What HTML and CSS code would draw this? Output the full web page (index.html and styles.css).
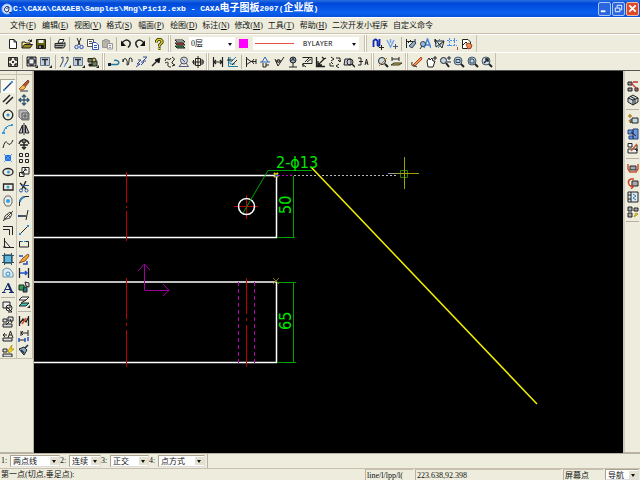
FILE: index.html
```
<!DOCTYPE html>
<html lang="zh-CN">
<head>
<meta charset="utf-8">
<title>CAXA电子图板2007</title>
<link rel="stylesheet" href="styles.css">
</head>
<body>
<div class="app">
<header class="titlebar">
<svg class="logo" viewBox="0 0 12 12"><circle cx="6" cy="6" r="5" fill="#dce8ff" stroke="#8fb4ff"/><path d="M8.500 4.500Q6 2 4 4.500T5 9Q8 9.500 8 6T5.500 6M8 9.500H11" fill="none" stroke="#14306c"/></svg>
<h1>C:\CAXA\CAXAEB\Samples\Mng\Pic12.exb - CAXA<span>电子图板</span>2007(<span>企业版</span>)</h1>
<div class="winbtns">
<button aria-label="最小化"><svg viewBox="0 0 12 12"><path d="M2 9H7" stroke-width="2"/></svg></button>
<button aria-label="还原"><svg viewBox="0 0 12 12"><path d="M4.500 5V2.500H9.500V7.500H8M2.500 5.500H7.500V9.500H2.500Z"/></svg></button>
<button class="close" aria-label="关闭"><svg viewBox="0 0 12 12"><path d="M2.500 2.500L9.500 9.500M9.500 2.500L2.500 9.500" stroke-width="2"/></svg></button>
</div>
</header>
<nav class="menu">
<a href="#">文件(<u>F</u>)</a><a href="#">编辑(<u>E</u>)</a><a href="#">视图(<u>V</u>)</a><a href="#">格式(<u>S</u>)</a><a href="#">幅面(<u>P</u>)</a><a href="#">绘图(<u>D</u>)</a><a href="#">标注(<u>N</u>)</a><a href="#">修改(<u>M</u>)</a><a href="#">工具(<u>T</u>)</a><a href="#">帮助(<u>H</u>)</a><a href="#">二次开发小程序</a><a href="#">自定义命令</a>
</nav>
<div class="toolbars">
<div class="row">
<div class="group">
<button aria-label="新建"><svg viewBox="0 0 12 12"><path d="M2.500 1.500H7L9.500 4V10.500H2.500ZM7 1.500V4H9.500" fill="#fff"/></svg></button>
<button aria-label="打开"><svg viewBox="0 0 12 12"><path d="M1 10V4H4L5 5H9V7" fill="#ffe97a"/><path d="M1 10L3.500 6.500H11.500L9 10Z" fill="#9a8a20"/><path d="M7 2.500Q9 1 10.500 3.500M10.500 1.500V3.500H8.500"/></svg></button>
<button aria-label="保存"><svg viewBox="0 0 12 12"><path d="M1.500 1.500H10.500V10.500H1.500Z" fill="#66660e"/><path d="M3.500 2H8.500V5H3.500Z" fill="#eee" stroke="none"/><path d="M3.500 7.500H8.500V10H3.500Z" fill="#111"/><path d="M5 8V10" stroke="#fff"/></svg></button>
<i class="sep"></i>
<button aria-label="打印"><svg viewBox="0 0 12 12"><path d="M4 5L5.500 1.500H10L8.500 5Z" fill="#fff"/><path d="M1 5.500H9.500L11 4.500V8L9.500 10H1Z" fill="#aaa"/><path d="M1 7.500H9.500M2.500 9.500H8" stroke="#333"/></svg></button>
<i class="sep"></i>
<button aria-label="剪切"><svg viewBox="0 0 12 12"><path d="M4 0L7 7M8 0L5 7"/><g stroke="#2348b8"><circle cx="3.500" cy="9" r="1.700"/><circle cx="8.500" cy="9" r="1.700"/></g></svg></button>
<button aria-label="复制"><svg viewBox="0 0 12 12"><path d="M.5 1.500H6.500V8.500H.5Z" fill="#fff" stroke="#555"/><path d="M2 3.500H5M2 5.500H5" stroke="#555"/><path d="M5.500 4.500H9L11.500 7V11.500H5.500Z" fill="#fff" stroke="#3455b8"/><path d="M7 7.500H10M7 9.500H10" stroke="#3455b8"/></svg></button>
<button aria-label="粘贴"><svg viewBox="0 0 12 12"><path d="M1.500 2.500H8.500V9.500H1.500Z" fill="#b9b5a7" stroke="#999"/><path d="M3.500 1.500H6.500V3H3.500Z" fill="#ddd" stroke="#999"/><path d="M6.500 5.500H11.500V11H6.500ZM8 7.500H10M8 9.500H10" fill="#eee" stroke="#999"/></svg></button>
<i class="sep"></i>
<button aria-label="撤消"><svg viewBox="0 0 12 12"><path d="M2 5Q6 0 9.500 3.500Q11.500 6 8 9.500" stroke-width="1.500"/><path d="M1 2.500V8H6Z" fill="#111" stroke="none"/></svg></button>
<button aria-label="重做"><svg viewBox="0 0 12 12"><path d="M10 5Q6 0 2.500 3.500Q.5 6 4 9.500" stroke-width="1.500"/><path d="M11 2.500V8H6Z" fill="#111" stroke="none"/></svg></button>
<i class="sep"></i>
<button aria-label="帮助"><svg viewBox="0 0 12 12"><path d="M3.500 4.500V3L5 1.500H7.500L9 3V4.500L6.500 7V8.500M5.500 10.500H7.500" stroke-width="3"/><path d="M3.500 4.500V3L5 1.500H7.500L9 3V4.500L6.500 7V8.500M5.500 10.500H7.500" stroke="#e0d414" stroke-width="1.500"/></svg></button>
</div>
<div class="group grip layers">
<button aria-label="层控制"><svg viewBox="0 0 12 12"><path d="M1 2H9L11 4H3Z" fill="#fff"/><path d="M1 5H9L11 7H3Z" fill="#d94a42"/><path d="M1 8H9L11 10H3Z" fill="#36a05c"/></svg></button>
<span class="combo layer"><select aria-label="当前层"><option>0层</option></select></span>
<button class="swatch" aria-label="颜色"></button>
<span class="combo linetype"><select aria-label="线型"><option>BYLAYER</option></select></span>
</div>
<div class="group grip">
<button aria-label="捕捉设置"><svg viewBox="0 0 12 12"><path d="M1.500 9V3Q3.500 0 5.500 3V7Q6.500 9 7.500 7V1" stroke="#112bb0" stroke-width="1.800"/><path d="M7 9.500H12M9.500 7V12"/></svg></button>
<button aria-label="导航设置"><svg viewBox="0 0 12 12"><path d="M1 2L4.500 9L8 2M4.500 1V5" stroke="#7aa4e8" stroke-width="1.500"/><path d="M7 8.500H12M9.500 6V11" stroke="#457"/></svg></button>
<i class="sep"></i>
<button aria-label="两点距离"><svg viewBox="0 0 12 12"><path d="M1.500 1V10M1 3.500H10M10 1V6M3 5L6 2"/><path d="M4 8L9 3L11 5L7 10Z" fill="#9ab" stroke="#246"/></svg></button>
<button aria-label="文字查找"><svg viewBox="0 0 12 12"><path d="M5 10L8.500 1L12 10M6.500 7H10.500" stroke="#4887dd" stroke-width="1.600"/><circle cx="4" cy="6" r="2.500" fill="#9bd" stroke="#345"/><path d="M1 11L3 8"/></svg></button>
<button aria-label="查询"><svg viewBox="0 0 12 12"><path d="M1 3H11M2 1L9 10L11 3L3 9Z"/><path d="M2 7L7 1M5 10L9 5" stroke="#3178b7"/></svg></button>
<button aria-label="栅格"><svg viewBox="0 0 12 12"><path d="M2.500 0V9M7.500 0V9M0 2.500H10M0 7.500H10" stroke="#4c8ff0" stroke-dasharray="2 1"/><path d="M10.500 9V12" stroke="#d43"/></svg></button>
<button aria-label="属性"><svg viewBox="0 0 12 12"><path d="M1.500 1.500H7L9.500 4V10.500H1.500Z" fill="#fff"/><path d="M2 7L5 4L7 6"/><path d="M5 6L8 5L11 7L10 10L7 11Z" fill="#ed8d54" stroke="#a54420"/></svg></button>
</div>
</div>
<div class="row second">
<div class="group">
<button aria-label="图幅设置"><svg viewBox="0 0 12 12"><path d="M1.500 1.500H10.500V10.500H1.500Z"/><path d="M3 5V3H5M7 3H9V5M9 7V9H7M5 9H3V7" stroke-width="1.400"/><path d="M5 5H7V7H5Z" fill="#333" stroke="none"/></svg></button>
<i class="sep"></i>
<button aria-label="调入图框"><svg viewBox="0 0 12 12"><path d="M1 1H10V10H1Z" fill="#444"/><path d="M3.500 3.500H7.500V7.500H3.500Z" fill="#e8eef5" stroke="none"/><path d="M2 3.500V2H3.500M7.500 2H9V3.500M2 7.500V9H3.500M7.500 9H9V7.500" stroke="#bcd"/><path d="M12 9V12H9Z" fill="#222" stroke="none"/></svg></button>
<button aria-label="标题栏"><svg viewBox="0 0 12 12"><path d="M.5 1.500H9.500V9.500H.5Z" fill="#bfcde0" stroke="#678"/><path d="M2 3.500H8M5 3V9" stroke-width="1.500"/><path d="M12 9V12H9Z" fill="#222" stroke="none"/></svg></button>
<i class="sep"></i>
<button aria-label="零件序号"><svg viewBox="0 0 12 12"><path d="M1 11L4 5V1M2 2L4 1M6 9L9 4V1M7 2L9 1" stroke="#345"/><path d="M5 11L8 6" stroke="#4680d0"/><path d="M12 9V12H9Z" fill="#222" stroke="none"/></svg></button>
<button aria-label="明细表"><svg viewBox="0 0 12 12"><path d="M.5 1.500H9.500V9.500H.5Z" fill="#bfcde0" stroke="#678"/><path d="M2 3.500H8M5 3V9" stroke-width="1.500"/><path d="M12 9V12H9Z" fill="#222" stroke="none"/></svg></button>
<button aria-label="图库"><svg viewBox="0 0 12 12"><path d="M1 2.500H6V6H1ZM5 5H10V10H5Z" fill="#6b7b56"/><circle cx="7" cy="4" r="2" fill="#c8b860"/><path d="M2 8H5V10H2Z" fill="#111"/><path d="M12 9V12H9Z" fill="#222" stroke="none"/></svg></button>
</div>
<div class="group grip">
<button aria-label="箭头"><svg viewBox="0 0 12 12"><path d="M1 8.500H9Q11.500 8 10.500 5.500Q9 3.500 6 4.500" stroke="#247ca5" stroke-width="1.500"/><path d="M0 7H3V10H0Z" fill="#123" stroke="none"/></svg></button>
<button aria-label="波浪线"><svg viewBox="0 0 12 12"><path d="M1 3V6Q2 1 4 3T5 9Q7 10 7 5T10 3V6"/></svg></button>
<button aria-label="双折线"><svg viewBox="0 0 12 12"><path d="M0 11L4 8H1L5 4H2M5 6H8L5 9M7 1H11L7 5H10" stroke="#334b9a"/></svg></button>
<button aria-label="箭头线"><svg viewBox="0 0 12 12"><path d="M2 10L9 3" stroke-width="1.500"/><path d="M10 2L9 7L5 4Z" fill="#111"/></svg></button>
<button aria-label="齿轮"><svg viewBox="0 0 12 12"><path d="M1 5Q2 1 4 3T7 2M1 7Q5 5 4 8T7 11M8 1Q12 3 9 5T11 9L8 10"/></svg></button>
<button aria-label="圆弧拟合"><svg viewBox="0 0 12 12"><circle cx="6" cy="4.500" r="3.500" fill="#ccd4dd" stroke="#555"/><path d="M4 7L1 10.500H10.500L8 7M4 3L7 6" stroke="#558"/></svg></button>
<button aria-label="孔轴"><svg viewBox="0 0 12 12"><path d="M3.500 2.500H8.500V9.500H3.500ZM1.500 4V8H3M9 4H11V8H9M0 6H12M6 0V12"/></svg></button>
</div>
<div class="group grip">
<button aria-label="尺寸标注"><svg viewBox="0 0 12 12"><path d="M1.500 1V11M10.500 1V11M1 6H11M4 4L2 6L4 8M8 4L10 6L8 8" stroke-width="1.200"/></svg></button>
<button aria-label="坐标标注"><svg viewBox="0 0 12 12"><path d="M2.500 1V10.500H12M4 1V8H9M5 6L10 1" stroke="#287ba5"/><path d="M6 9L11 4M1 4H7"/></svg></button>
<i class="sep"></i>
<button aria-label="倒角标注"><svg viewBox="0 0 12 12"><path d="M1.500 1V11M1 2L6 5.500L1 9M6 5.500H11M9 3L7 5.500L9 8M11 3V8"/></svg></button>
<button aria-label="引出说明"><svg viewBox="0 0 12 12"><path d="M1 6H11M6 1L3 6M6 1L9 6" stroke="#2d62ba"/><path d="M4 7V11M7 7V11H4M7 9H10"/></svg></button>
<button aria-label="粗糙度"><svg viewBox="0 0 12 12"><path d="M2 3L5 10L11 1M2.500 5H8"/><circle cx="5.500" cy="5" r="1.500"/></svg></button>
<button aria-label="基准代号"><svg viewBox="0 0 12 12"><circle cx="6" cy="4" r="3" fill="#92a7bf"/><path d="M6 7V11M2 11H10M4.500 5L6 2L7.500 5"/></svg></button>
<button aria-label="形位公差"><svg viewBox="0 0 12 12"><path d="M1.500 1.500H11V7.500H2V11M4 6L8 2M6 6L10 3M1 8L5 11"/></svg></button>
<button aria-label="焊接符号"><svg viewBox="0 0 12 12"><path d="M1.500 1V10.500H10M2 10L9 3M3 5V9H7M7 1L9 3L11 2" stroke-width="1.300"/></svg></button>
<button aria-label="剖切符号"><svg viewBox="0 0 12 12"><path d="M2 1L5 3L2 5M7 2H11V5M9 4L11 6L12 4M10 8L7 10L10 12M1 7V10H5M2 6L4 8"/></svg></button>
<button aria-label="局部放大"><svg viewBox="0 0 12 12"><path d="M2 3H8V9H1Z" fill="#ccd"/><circle cx="7" cy="6" r="3"/><path d="M9 8L12 11" stroke-width="1.500"/></svg></button>
<button aria-label="标注编辑"><svg viewBox="0 0 12 12"><path d="M1 2H4V9H1M2 5.500H6M8 9L9.500 3L11 9M8 7H11"/></svg></button>
</div>
<div class="group grip">
<button aria-label="重生成"><svg viewBox="0 0 12 12"><circle cx="5" cy="5" r="3.500" fill="#cddde5"/><path d="M8 8L11 11" stroke-width="2"/><path d="M2 10L10 2" stroke="#b8712c"/></svg></button>
<button aria-label="全部重生成"><svg viewBox="0 0 12 12"><path d="M1 3H8M8 1V5M1 1V5"/><path d="M0 9L3 7H11L8 9Z" fill="#d5bb34" stroke="#333"/></svg></button>
</div>
<div class="group grip">
<button aria-label="重画"><svg viewBox="0 0 12 12"><path d="M2 9L8 3L10 1L11 3L4 10Z" fill="#e99a4a" stroke="#b5452c"/><path d="M1 6Q0 11 4 10L6 11" stroke="#222"/></svg></button>
<button aria-label="动态平移"><svg viewBox="0 0 12 12"><path d="M2 5L4 2L5 4L7 2L8 5L10 5L8 11H3Z" fill="#fff"/><path d="M8 2H12M10 0V4"/></svg></button>
<button aria-label="动态缩放"><svg viewBox="0 0 12 12"><circle cx="4.500" cy="4.500" r="3" fill="#bcd5e5"/><path d="M7 7L10 11" stroke-width="2"/><path d="M8 2H12M10 0V4M8 6H12" stroke="#224"/></svg></button>
<button aria-label="窗口缩放"><svg viewBox="0 0 12 12"><circle cx="5" cy="5" r="4" fill="#bcd5e5" stroke="#456"/><path d="M3 3.500H7V6.500H3Z" stroke="#345"/><path d="M8 8L11 11" stroke-width="2"/></svg></button>
<button aria-label="显示全部"><svg viewBox="0 0 12 12"><circle cx="5" cy="5" r="4" fill="#bcd5e5" stroke="#456"/><path d="M3 7V3H6L7 4V7Z" stroke="#345"/><path d="M8 8L11 11" stroke-width="2"/></svg></button>
<button aria-label="显示上一步"><svg viewBox="0 0 12 12"><circle cx="5" cy="5" r="4" fill="#cde" stroke="#456"/><path d="M3 7L7 3M4 3H7V6" stroke-width="1.500"/><path d="M8 8L11 11" stroke-width="2"/></svg></button>
</div>
</div>
</div>
<main class="work">
<aside class="side left">
<div class="col">
<div class="stack fifteen">
<button class="on" aria-label="直线"><svg viewBox="0 0 12 12"><path d="M2 10L10 2" stroke="#17376c" stroke-width="1.300"/><path d="M1 9H3V11H1ZM9 1H11V3H9Z" fill="#3a9ae8" stroke="none"/></svg></button>
<button aria-label="平行线"><svg viewBox="0 0 12 12"><path d="M1 8L8 1M4 10L11 3" stroke-width="1.500"/></svg></button>
<button aria-label="圆"><svg viewBox="0 0 12 12"><circle cx="6" cy="6" r="4.800" stroke-width="1.300"/><circle cx="6" cy="6" r="1.500" fill="#2e8ddb" stroke="none"/></svg></button>
<button aria-label="圆弧"><svg viewBox="0 0 12 12"><path d="M1.500 10Q2 3 10 2" stroke="#247dbb"/><path d="M0 9H3V11H0ZM3 4H5V6H3ZM9 1H11V3H9Z" fill="#349be4" stroke="none"/></svg></button>
<button aria-label="样条"><svg viewBox="0 0 12 12"><path d="M1 10Q3 1 5.500 5T11 2"/></svg></button>
<button aria-label="点"><svg viewBox="0 0 12 12"><path d="M3 3H9V9H3Z" fill="#236de6" stroke="none"/><path d="M2 2L10 10M10 2L2 10" stroke="#559be5"/></svg></button>
<button aria-label="椭圆"><svg viewBox="0 0 12 12"><ellipse cx="6" cy="6" rx="5" ry="3.500" stroke-width="1.300"/><circle cx="6.500" cy="6" r="1.500" fill="#31a0e4" stroke="none"/></svg></button>
<button aria-label="矩形"><svg viewBox="0 0 12 12"><path d="M1.500 3H11V9H1.500Z" stroke-width="1.300"/><circle cx="6" cy="6" r="1.500" fill="#31a0e4" stroke="none"/></svg></button>
<button aria-label="正多边形"><svg viewBox="0 0 12 12"><path d="M4 1H8L10 4V8L8 11H4L2 8V4Z" stroke="#667"/><circle cx="6" cy="6" r="2" fill="#31a0e4" stroke="none"/></svg></button>
<button aria-label="中心线"><svg viewBox="0 0 12 12"><path d="M2 10L3 6L8 2L10 4L8 8L4 9ZM1 11L11 1M5 4L8 7" stroke="#444"/></svg></button>
<button aria-label="等距线"><svg viewBox="0 0 12 12"><path d="M1 2.500H10.500V11M1 5.500H7.500V11"/></svg></button>
<button aria-label="公式曲线"><svg viewBox="0 0 12 12"><path d="M2.500 0V9.500H12M2 2L8 9M1 9H4"/></svg></button>
<button aria-label="剖面线"><svg viewBox="0 0 12 12"><path d="M2 2H10V10H2Z" fill="#5fb7dc"/><path d="M0 2.500H12M0 9.500H12M2.500 0V12M9.500 0V12" stroke="#245574"/></svg></button>
<button aria-label="填充"><svg viewBox="0 0 12 12"><path d="M1 9V3L4 1L8 2L11 6V10H1Z" fill="#dcecf0" stroke="#6894aa"/><circle cx="6" cy="7" r="2" stroke="#388eca"/></svg></button>
<button aria-label="文字"><svg viewBox="0 0 12 12"><path d="M1.500 10.500L6 1.500L10 10.500M3 7.500H8M0 10.500H3.500M7 10.500H12" stroke="#142b6a"/><path d="M6 1.500L10 10.500" stroke="#142b6a" stroke-width="2"/></svg></button>
</div>
<hr>
<div class="stack four">
<button aria-label="块生成"><svg viewBox="0 0 12 12"><path d="M1 1H8V7H1Z" fill="#eee"/><circle cx="7" cy="7" r="3"/><path d="M5 6L10 11H6"/></svg></button>
<button aria-label="块打散"><svg viewBox="0 0 12 12"><path d="M1 3H5V6H1ZM6 1H11V5H6ZM1 8H10V11H1Z" fill="#d9dce0"/><path d="M7 6L4 9M8 3L10 7"/></svg></button>
<button aria-label="块属性"><svg viewBox="0 0 12 12"><path d="M1 8H10V11H1Z" fill="#d9dce0"/><path d="M6 8L8.500 1L11 8M7 5H10M1 5H5M3 3L1 5L3 7"/></svg></button>
<button aria-label="块编辑"><svg viewBox="0 0 12 12"><path d="M1 4H5V7H1ZM1 9H10V12H1Z" fill="#d9dce0"/><path d="M6 6L10 0L9 4H12L7 8Z" fill="#f0de27" stroke="#bb9d15"/></svg></button>
</div>
</div>
<div class="col">
<div class="stack sixteen">
<button aria-label="删除"><svg viewBox="0 0 12 12"><path d="M5 5L10 0L11 2L7 7Z" fill="#b9571e" stroke="#733"/><path d="M1 9L5 5L8 7L5 10Z" fill="#eebc56" stroke="#a62"/><path d="M2 11H10" stroke="#333"/></svg></button>
<button aria-label="平移"><svg viewBox="0 0 12 12"><path d="M6 1V11M1 6H11M4 3L6 1L8 3M4 9L6 11L8 9M3 4L1 6L3 8M9 4L11 6L9 8" stroke="#34546e" stroke-width="1.300"/></svg></button>
<button aria-label="复制选择"><svg viewBox="0 0 12 12"><path d="M1 1H8L11 4V11H4L1 8Z" fill="#bbb" stroke="#777"/><path d="M4 4H10V10H4ZM7 5V9M5 7H9" stroke="#555"/></svg></button>
<button aria-label="镜像"><svg viewBox="0 0 12 12"><path d="M1 10L4.500 2V10ZM11 10L7.500 2V10Z" fill="#bbc"/><path d="M6 0V12"/></svg></button>
<button aria-label="旋转"><svg viewBox="0 0 12 12"><path d="M1 6Q2 2 6 2T11 6M2 7H10M6 4V11M4 9L6 11L8 9" stroke-width="1.300"/><circle cx="6" cy="3" r="2" fill="#777"/></svg></button>
<button aria-label="阵列"><svg viewBox="0 0 12 12"><path d="M1.500 1.500H4.500V4.500H1.500ZM7.500 1.500H10.500V4.500H7.500ZM1.500 7.500H4.500V10.500H1.500ZM7.500 7.500H10.500V10.500H7.500Z"/></svg></button>
<button aria-label="比例缩放"><svg viewBox="0 0 12 12"><path d="M4 1.500H11V8H4ZM1.500 6.500H6V10.500H1.500Z" fill="#f5f4ee"/><path d="M5 6L8 3M6 3H8V5"/></svg></button>
<button aria-label="裁剪"><svg viewBox="0 0 12 12"><path d="M8 0L4 8M2 2L8 8" stroke-width="1.400"/><circle cx="3" cy="9.500" r="1.500" stroke="#28569c"/><circle cx="8.500" cy="9.500" r="1.500" stroke="#28569c"/><path d="M3 4.500H11" stroke="#28569c"/></svg></button>
<button aria-label="过渡"><svg viewBox="0 0 12 12"><path d="M1.500 11V7Q2 2 7 1.500H11"/><path d="M2 7Q3 3 7 2" stroke="#2f87cc" stroke-width="1.500"/></svg></button>
<button aria-label="齐边"><svg viewBox="0 0 12 12"><path d="M0 7H8" stroke-width="1.500"/><path d="M0 7H3" stroke="#24b" stroke-width="1.500"/><path d="M8 11L10 1"/></svg></button>
<button aria-label="打断"><svg viewBox="0 0 12 12"><path d="M2 10L10 2"/><path d="M1 9H3V11H1ZM9 1H11V3H9Z" fill="#2e8ddb" stroke="none"/></svg></button>
<button aria-label="拉伸"><svg viewBox="0 0 12 12"><path d="M5 3.500H1.500V9H10.500V3.500H7"/><path d="M3 3.500H9" stroke="#268bc7" stroke-dasharray="2 1"/></svg></button>
<button aria-label="格式刷"><svg viewBox="0 0 12 12"><path d="M1 10L5 5L10 1L11 3L7 8Z" fill="#efaa38" stroke="#974a29"/><path d="M1 3H5M9 8V11H5" stroke="#254bba" stroke-width="1.500"/></svg></button>
<button aria-label="对齐"><svg viewBox="0 0 12 12"><path d="M1.500 1V11M10.500 1V11" stroke-width="1.300"/><path d="M2 6H9M7 4L9 6L7 8" stroke="#1e50ca" stroke-width="1.500"/></svg></button>
<button aria-label="改变颜色"><svg viewBox="0 0 12 12"><path d="M1 4H6V9H1Z" fill="#25a855"/><path d="M6 6H9V11H5Z" fill="#247a89"/><path d="M7 1L11 2V6L8 5Z" fill="#ddd"/></svg></button>
<button aria-label="改变层"><svg viewBox="0 0 12 12"><path d="M4 1H11L8 4H1Z" fill="#fff"/><path d="M4 7H11L8 10H1Z" fill="#3bc9ba"/><path d="M8 4L3 7"/><path d="M12 9V12H9Z" fill="#222" stroke="none"/></svg></button>
</div>
<hr>
<div class="stack three">
<button aria-label="标注修改"><svg viewBox="0 0 12 12"><path d="M1.500 1V11M10.500 1V11M2 8L5 4L8 7L10 3" stroke-width="1.300"/><path d="M4 9L8 3" stroke="#d44a28" stroke-width="1.500"/></svg></button>
<button aria-label="尺寸驱动"><svg viewBox="0 0 12 12"><path d="M3 1V6M10 0V6M3 3H10M5 1L3 3L5 5M1 10H7"/><path d="M1 8V12M7 8V12M10 7V11" stroke="#254fc0" stroke-width="1.500"/></svg></button>
<button aria-label="特性刷"><svg viewBox="0 0 12 12"><path d="M1 5L6 3L9 6L6 11Z" fill="#8aa9c4"/><path d="M7 4L10 1M3 6L6 9" stroke="#21344e" stroke-width="1.700"/></svg></button>
</div>
</div>
</aside>
<svg class="canvas" viewBox="34 71 589 382" preserveAspectRatio="xMinYMin meet">
<g fill="none" stroke-width="1">
<path d="M34 175.500H276.500V237.500H34M34 282H276.500V362.500H34" stroke="#fff" stroke-width="1.500"/>
<path d="M126.500 172V203M126.500 206V208M126.500 211V241M126.500 278V319M126.500 323V326M126.500 330V367M246.500 278V314M246.500 318V321M246.500 325V367" stroke="#c00000"/>
<path d="M234 206.500H258M246.500 195V219" stroke="#c00000"/>
<circle cx="246.500" cy="206.500" r="8" stroke="#fff" stroke-width="1.500"/>
<g stroke="#00a000">
<path d="M243 213L268 170.500H312M293.500 176V237.500M277 237.500H295M277 282.500H296M293.500 282.500V362.500M277 362.500H296"/>
<path d="M400.500 170.500H407.500V177.500H400.500Z" stroke="#208000"/>
</g>
<path d="M238.500 282V363M254.500 282V363" stroke="#b000b0" stroke-dasharray="4 3"/>
<path d="M144.500 290V264M138 271L144.500 264L150 270M144.500 290.500H169M163 284L169 290.500L163 296" stroke="#a000a0"/>
<path d="M278 175.500H396" stroke="#b8b8b8" stroke-dasharray="2 2"/>
<path d="M278 175.500H294" stroke="#c000c0" stroke-dasharray="2 2"/>
<path d="M311 167L537 404" stroke="#f4f000" stroke-width="1.500"/>
<path d="M388 173.500H419M404.500 157V189" stroke="#a0a000"/>
<path d="M388 173.500H397" stroke="#999"/>
<path d="M274 173L278 177M278 173L274 177" stroke="#e8d000" stroke-width="2"/><path d="M275 175.500H278" stroke="#2864e0" stroke-width="2"/>
<path d="M273 278L279 284M279 278L273 284" stroke="#807800"/>
</g>
<g class="dims">
<text x="276" y="168">2-ϕ13</text>
<text transform="translate(291 214) rotate(-90)">50</text>
<text transform="translate(291 330) rotate(-90)">65</text>
</g>
</svg>
<aside class="side right">
<div class="stack two">
<button aria-label="构件库"><svg viewBox="0 0 12 12"><path d="M1 2H5V5H1ZM1 8H5V11H1ZM8 8H11V11H8Z" fill="#999"/><path d="M6 2H11M4 3L11 10" stroke="#b33" stroke-width="1.300"/></svg></button>
<button aria-label="三维视图"><svg viewBox="0 0 12 12"><path d="M1 4L6 1L11 4V8L6 11L1 8ZM1 4L6 6L11 4M6 6V11M3 2L8 5V10" fill="#c7d2d9"/></svg></button>
</div>
<hr>
<div class="stack three">
<button aria-label="提取图符"><svg viewBox="0 0 12 12"><path d="M5 5H11V10H5Z" fill="#bfdae7"/><path d="M3 1V5M1 3H5M2 7L4 10" stroke="#b6862c" stroke-width="1.500"/><path d="M4 6V10"/></svg></button>
<button aria-label="定义图符"><svg viewBox="0 0 12 12"><path d="M1 2H6V6H1ZM6 1H11V11H6ZM2 8H6V11H2Z" fill="#6f99dc" stroke="#233e78"/><path d="M4 4L9 8"/></svg></button>
<button aria-label="图库管理"><svg viewBox="0 0 12 12"><path d="M1 1.500H5V5H1ZM1 7H10V11H1Z" fill="#eee"/><path d="M4 9L10 2" stroke="#c65d38" stroke-width="1.500"/><path d="M8 7L10 9V3"/></svg></button>
</div>
<hr>
<div class="stack four">
<button aria-label="驱动图符"><svg viewBox="0 0 12 12"><path d="M1 2V7L3 10H9L11 7V2" stroke="#c95032" stroke-width="1.500"/><path d="M3 4H9V8H3Z" fill="#a0a6b2"/></svg></button>
<button aria-label="图库转换"><svg viewBox="0 0 12 12"><path d="M5 4H11V9H5Z" fill="#aaa"/><path d="M7 2H4Q1 3 1.500 6T6 10M4 8L6 10L4 12" stroke="#c94328" stroke-width="1.500"/></svg></button>
<button aria-label="幅面库"><svg viewBox="0 0 12 12"><path d="M1 1H11V11H1ZM4 1V11M1 4H4M1 8H4" fill="#dce8ed"/><path d="M6 3L9 5L6 7L9 9" stroke="#347ebd"/></svg></button>
<button aria-label="技术要求"><svg viewBox="0 0 12 12"><path d="M1 1H5V5H1ZM1 7H5V11H1ZM7 2H11V5H7Z" fill="#aaa"/><path d="M7 11L9 7L11 8Z" fill="#e8d530" stroke="#b49e16"/></svg></button>
</div>
<hr>
</aside>
</main>
<section class="options">
<label for="o1">1:</label><span class="combo boxed w50"><select id="o1"><option>两点线</option></select></span>
<label for="o2">2:</label><span class="combo boxed w32"><select id="o2"><option>连续</option></select></span>
<label for="o3">3:</label><span class="combo boxed w39"><select id="o3"><option>正交</option></select></span>
<label for="o4">4:</label><span class="combo boxed w47"><select id="o4"><option>点方式</option></select></span>
<i class="sep"></i>
</section>
<footer class="status">
<p>第一点(切点,垂足点):</p>
<output class="cmd">line/l/lpp/l(</output>
<output class="coord">223.638,92.398</output>
<output class="pick">屏幕点</output>
<span class="combo boxed w34"><select aria-label="捕捉方式"><option>导航</option></select></span>
</footer>
</div>
</body>
</html>
```
FILE: styles.css
```
* { box-sizing: border-box; }
body { margin: 0; background: #eeeddd; color: #111; font: 8px/12px "Liberation Serif", "Noto Sans CJK SC", serif; }
.app { display: flex; flex-direction: column; height: 100vh; overflow: hidden; }
button { margin: 0; padding: 0; border: 0; background: none; display: flex; align-items: center; justify-content: center; }
button svg { display: block; width: 12px; height: 12px; fill: none; stroke: #222; }

.titlebar { flex: none; display: flex; align-items: center; height: 17px; padding: 0 1px; color: #fff; background: linear-gradient(#2a70e0, #0048d8 20%, #0a60f0 75%, #0850d8); }
.logo { width: 12px; height: 12px; }
h1 { flex: 1; margin: 0; font: bold 8px/16px "Liberation Mono", "Noto Sans CJK SC", monospace; white-space: nowrap; }
h1 span { font-size: 10px; }
.winbtns { display: flex; gap: 1px; }
.winbtns button { width: 13px; height: 14px; border: 1px solid #a9c5f8; border-radius: 2px; background: #2b66df; }
.winbtns svg { width: 11px; height: 11px; stroke: #fff; }
.winbtns .close { background: #dc4b25; border-color: #f3b8a4; }

.menu { flex: none; display: flex; align-items: center; gap: 5px; height: 17px; padding-left: 10px; border-top: 1px solid #fff; border-bottom: 1px solid #cbc0b0; }
.menu a { min-width: 27px; color: #111; text-decoration: none; white-space: nowrap; }

.toolbars { flex: none; }
.row { display: flex; height: 18px; border-top: 1px solid #fff; }
.group { display: flex; align-items: center; padding: 0 2px 0 6px; border-right: 1px solid #c9bfae; }
.grip { padding-left: 5px; border-left: 1px solid #fff; box-shadow: inset 1px 0 #c9bfae; }
.second .grip { padding: 0 1px 0 3px; }
.group button { width: 14px; height: 15px; }
.sep { width: 1px; height: 14px; margin: 0 2px; background: #b8b0a0; }
.layers { padding-left: 3px; }
.combo { position: relative; display: block; background: #fff; }
.combo select { display: block; width: 100%; height: 100%; margin: 0; padding: 0 9px 0 2px; border: 0; border-radius: 0; appearance: none; background: none; color: #111; font: inherit; }
.combo::after { content: ""; position: absolute; right: 3px; top: 50%; margin-top: -1px; border: 2px solid transparent; border-top: 3px solid #111; border-bottom: 0; pointer-events: none; }
.layer { width: 46px; height: 13px; margin-left: 2px; }
.group .swatch { width: 9px; height: 9px; margin: 0 5px 0 4px; background: #f0f; }
.linetype { width: 106px; height: 13px; margin-right: 3px; }
.linetype select { padding-left: 50px; font: 7px/12px "Liberation Mono", monospace; }
.linetype::before { content: ""; position: absolute; left: 2px; width: 39px; top: 6px; border-top: 1px solid #e85040; }

.work { flex: 1; display: flex; min-height: 0; border-top: 1px solid #555; }
.side { flex: none; border-bottom: 1px solid #bbb3a5; }
.left { display: flex; width: 34px; border-right: 1px solid #b8b0a0; }
.right { width: 17px; padding-top: 8px; border-left: 2px solid #cfcabc; }
.col { flex: 1; align-self: flex-start; padding-top: 8px; border-right: 1px solid #c9bfae; border-bottom: 1px solid #c9bfae; box-shadow: inset 0 3px #eeeddd, inset 0 4px #c9bfae; }
.stack { display: grid; grid-auto-rows: 1fr; justify-items: center; }
.stack button { width: 15px; height: 14px; }
.stack .on { background: #faf9f3; box-shadow: inset 1px 1px #aaa392; }
.fifteen { height: 216px; }
.sixteen { height: 230px; }
.four { height: 58px; }
.three { height: 44px; }
.two { height: 28px; }
hr { height: 1px; margin: 2px 1px; border: 0; background: #b8b0a0; }
.canvas { flex: 1; min-width: 0; width: 100%; height: 100%; background: #000; }
.dims { fill: #00e800; font: 16px "Liberation Sans Narrow", "DejaVu Sans Condensed", sans-serif; }

.options { flex: none; display: flex; align-items: center; height: 15px; padding-left: 1px; border-top: 1px solid #b8b0a0; }
.options label { width: 9px; white-space: nowrap; }
.boxed { height: 12px; border: 1px solid #aaa392; border-right-color: #ddd; border-bottom-color: #ddd; }
.boxed::before { content: ""; position: absolute; right: 0; top: 1px; width: 9px; height: 8px; background: #e4e1d0; }
.w50 { width: 50px; }
.w32 { width: 32px; }
.w39 { width: 39px; }
.w47 { width: 47px; }
.w34 { width: 34px; }
.status { flex: none; display: flex; align-items: center; gap: 2px; height: 12px; padding-right: 1px; border-top: 1px solid #c9bfae; }
.status p { flex: 1; margin: 0; padding-left: 1px; }
.status output { height: 11px; line-height: 11px; overflow: hidden; white-space: nowrap; padding-left: 1px; border-left: 1px solid #b8b0a0; border-top: 1px solid #c9bfae; }
.cmd { width: 48px; }
.coord { width: 146px; }
.pick { width: 40px; }
.status .combo { height: 11px; }
```
